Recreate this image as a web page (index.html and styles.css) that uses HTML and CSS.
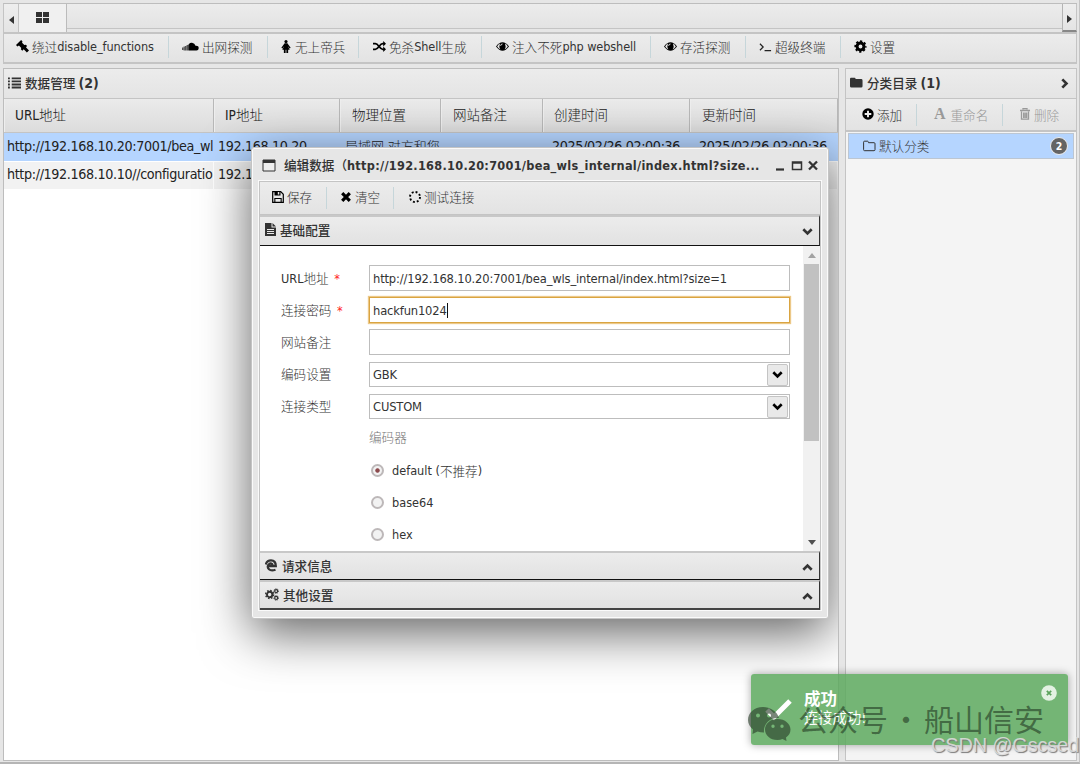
FILE: index.html
```html
<!DOCTYPE html>
<html lang="zh-CN">
<head>
  <meta charset="UTF-8">
  <title>数据管理</title>
  <link rel="stylesheet" href="styles.css">
</head>
<body>
  <svg class="defs" width="0" height="0">
    <symbol id="i-chevron" viewBox="0 0 10 8"><path d="M1.2 2 5 5.8 8.8 2" fill="none" stroke="currentColor" stroke-width="2.4"/></symbol>
    <symbol id="i-eye" viewBox="0 0 14 14"><path d="M0 7Q7-2 14 7 7 16 0 7Z"/><path d="M1.2 7Q2.700 4.600 4.300 3.900 2.800 7.400 4.700 10.200 2.700 9.400 1.200 7ZM12.800 7Q11.300 4.600 9.700 3.900 11.200 7.400 9.300 10.200 11.300 9.400 12.800 7Z" fill="#e9e9e9"/><path d="M5 6.300a2 2 0 0 1 2-2" fill="none" stroke="#e9e9e9"/></symbol>
    <symbol id="i-gear" viewBox="0 0 14 14"><g fill="none" stroke="#000"><circle cx="7" cy="7" r="3.700" stroke-width="3.200"/><circle cx="7" cy="7" r="5.500" stroke-width="2.200" stroke-dasharray="2.300 2.020" stroke-dashoffset="1.150"/></g></symbol>
  </svg>

  <div class="app">
    <div class="tabbar">
      <div class="arrow"><svg width="5" height="8"><path d="M5 0v8L0 4z" fill="#333"/></svg></div>
      <div class="tab"><svg width="13" height="11" fill="#333"><path d="M0 0h6v5H0zM7 0h6v5H7zM0 6h6v5H0zM7 6h6v5H7z"/></svg></div>
      <div class="tab-rest"></div>
      <div class="arrow right"><svg width="5" height="8"><path d="M0 0v8l5-4z" fill="#333"/></svg></div>
    </div>

    <div class="toolbar plugins">
      <div class="tool"><svg class="ic" viewBox="0 0 14 14"><path d="M0 5.500 5.500 0 7 1.500 6.500 3 9 5.500 10.500 5 12 6.500 10.700 7.800 14 11.200 11.700 13.500 8.300 10 6.800 11.500 5.200 10 5.700 8.700 3.200 6 1.500 7Z"/></svg>绕过<span>disable_functions</span></div>
      <div class="tool"><svg class="ic cloud" viewBox="0 0 17 9"><path d="M7 8.500V2Q8 .5 10 .7 12.800 1 13.500 3.800 16.700 3.500 16.700 6.200 16.500 8.500 14.500 8.500Z"/><path d="M.7 5.500v2.500M2.200 4.500v4M3.700 4v4.500M5.200 3v5.500M6.500 2.500v6" stroke="#444" stroke-width="1.200"/></svg>出网探测</div>
      <div class="tool"><svg class="ic slim" viewBox="0 0 10 14"><circle cx="5" cy="1.700" r="1.700"/><path d="M3.500 3.500h3L10 8.300 8.900 9.200 7 6.800 9 10.500H7.300V14H5.400v-3.500h-.8V14H2.700v-3.500H1L3 6.800 1.100 9.200 0 8.300Z"/></svg>无上帝兵</div>
      <div class="tool"><svg class="ic" viewBox="0 0 14 14"><path d="M0 4h2.500C6 4 7 10 10.500 10H12M0 10h2.500C6 10 7 4 10.500 4H12" fill="none" stroke="#000" stroke-width="1.900"/><path d="M11 1l3 3-3 3zM11 7l3 3-3 3z"/></svg>免杀<span>Shell</span>生成</div>
      <div class="tool"><svg class="ic"><use href="#i-eye"/></svg>注入不死<span>php webshell</span></div>
      <div class="tool"><svg class="ic"><use href="#i-eye"/></svg>存活探测</div>
      <div class="tool"><svg class="ic" viewBox="0 0 14 14"><path d="M1 4l3.500 3.500L1 11M6 11.500h7" fill="none" stroke="#222" stroke-width="1.300"/></svg>超级终端</div>
      <div class="tool"><svg class="ic"><use href="#i-gear"/></svg>设置</div>
    </div>

    <div class="main">
      <div class="data">
        <div class="panel-title"><svg class="ic" viewBox="0 0 14 14"><path d="M0 1.500h2v2H0zM0 4.800h2v2H0zM0 8.100h2v2H0zM0 11.400h2v2H0zM4 1.500h10v2H4zM4 4.800h10v2H4zM4 8.100h10v2H4zM4 11.400h10v2H4z"/></svg>数据管理 <span>(2)</span></div>
        <div class="row head">
          <div><span>URL</span>地址</div><div><span>IP</span>地址</div><div>物理位置</div><div>网站备注</div><div>创建时间</div><div>更新时间</div>
        </div>
        <div class="row selected">
          <div>http://192.168.10.20:7001/bea_wls_internal/index.html?size=1</div><div>192.168.10.20</div><div class="cn">局域网 对方和您在同一内部网</div><div></div><div>2025/02/26 02:00:36</div><div>2025/02/26 02:00:36</div>
        </div>
        <div class="row odd">
          <div>http://192.168.10.10//configuration.php</div><div>192.168.10.10</div><div></div><div></div><div></div><div></div>
        </div>

        <div class="window">
          <div class="win-head">
            <svg width="14" height="13" viewBox="0 0 14 13"><path d="M1 1h12v11H1z" fill="#eee" stroke="#333"/><path d="M1 1h12v3H1z" fill="#333"/></svg>
            <div class="win-title">编辑数据（<span>http://192.168.10.20:7001/bea_wls_internal/index.html?size...</span></div>
            <svg class="win-btns" width="44" height="12" viewBox="0 0 44 12"><path d="M1 9.500h8" stroke="#333" stroke-width="2.200"/><path d="M17.500 2h9v7.500h-9zM17 3h10" fill="none" stroke="#333" stroke-width="1.500"/><path d="M34 1.500l8 8M42 1.500l-8 8" stroke="#333" stroke-width="2.300"/></svg>
          </div>
          <div class="win-body">
            <div class="toolbar win-tools">
              <div class="tool"><svg class="ic small" viewBox="0 0 12 12"><path d="M.7.7h8l2.600 2.600v8H.7z" fill="none" stroke="#000" stroke-width="1.200"/><path d="M2.500 0h6v4.500h-6zM2.300 7h7.400v5H2.300z"/><path d="M5.800 1h1.500v2.500H5.800zM3.400 8h5.200v2.800H3.400z" fill="#e9e9e9"/></svg>保存</div>
              <div class="tool"><svg class="ic cross" viewBox="0 0 10 10"><path d="M1.200 1.200l7.600 7.600M8.800 1.200l-7.600 7.600" stroke="#000" stroke-width="3.200"/></svg>清空</div>
              <div class="tool"><svg class="ic small" viewBox="0 0 12 12"><circle cx="6" cy="6" r="5" fill="none" stroke="#000" stroke-width="1.900" stroke-dasharray="1.900 2.027"/></svg>测试连接</div>
            </div>
            <div class="acc open"><svg class="ic doc" viewBox="0 0 11 13"><path d="M0 0h6.500v4.500H11V13H0zM7.500 0 11 3.500H7.500z"/><path d="M2 6.500h7M2 8.500h7M2 10.500h7" stroke="#e9e9e9"/></svg>基础配置<svg class="chev"><use href="#i-chevron"/></svg></div>
            <div class="form">
              <div class="fields">
                <div class="field"><label><span>URL</span>地址 <i>*</i></label><div class="input">http://192.168.10.20:7001/bea_wls_internal/index.html?size=1</div></div>
                <div class="field"><label>连接密码 <i>*</i></label><div class="input focus">hackfun1024<b class="caret"></b></div></div>
                <div class="field"><label>网站备注</label><div class="input"></div></div>
                <div class="field"><label>编码设置</label><div class="input select">GBK<div class="drop"><svg><use href="#i-chevron"/></svg></div></div></div>
                <div class="field"><label>连接类型</label><div class="input select">CUSTOM<div class="drop"><svg><use href="#i-chevron"/></svg></div></div></div>
                <div class="encoder">编码器</div>
                <div class="radio on"><em></em>default (<span class="cn">不推荐</span>)</div>
                <div class="radio"><em></em>base64</div>
                <div class="radio"><em></em>hex</div>
              </div>
              <div class="scroll">
                <svg width="8" height="5"><path d="M0 5 4 0l4 5z" fill="#a3a3a3"/></svg>
                <div class="thumb"></div>
                <svg width="8" height="5"><path d="M0 0h8L4 5z" fill="#505050"/></svg>
              </div>
            </div>
            <div class="acc"><svg class="ic edge" viewBox="0 0 12 13"><path d="M.8 5.500C1.500 2.700 3.500 1.300 6 1.300c3 0 4.800 2 4.800 5.700H4M3.500 5.500C1.500 9 4.500 13 10.500 10.700M3.700 6C4.500 3.700 7.500 4 7.700 6.500" fill="none" stroke="#333" stroke-width="2.300"/></svg>请求信息<svg class="chev up"><use href="#i-chevron"/></svg></div>
            <div class="acc last"><svg class="ic gears" viewBox="0 0 15 14"><g fill="none" stroke="#333"><circle cx="5" cy="7" r="2.900" stroke-width="2.100"/><circle cx="5" cy="7" r="4.300" stroke-width="1.500" stroke-dasharray="1.700 1.677"/><circle cx="12" cy="3.300" r="1.600" stroke-width="1.300"/><circle cx="12" cy="10.700" r="1.600" stroke-width="1.300"/><circle cx="12" cy="3.300" r="2.500" stroke-dasharray="1 .963"/><circle cx="12" cy="10.700" r="2.500" stroke-dasharray="1 .963"/></g></svg>其他设置<svg class="chev up"><use href="#i-chevron"/></svg></div>
          </div>
        </div>
      </div>

      <div class="category">
        <div class="panel-title"><svg class="ic" viewBox="0 0 14 14"><path d="M1 2h4q1 0 1 1.300h6q1.500 0 1.500 1.500V11q0 1.300-1.500 1.300H1.500Q0 12.300 0 11V3.500Q0 2 1 2Z"/></svg>分类目录 <span>(1)</span><svg class="chev side"><use href="#i-chevron"/></svg></div>
        <div class="toolbar cat-tools">
          <div class="tool"><svg class="ic small" viewBox="0 0 12 12"><circle cx="6" cy="6" r="5.700"/><path d="M6 2.700v6.600M2.700 6h6.600" stroke="#eee" stroke-width="1.900"/></svg>添加</div>
          <div class="tool disabled"><span class="letter">A</span>重命名</div>
          <div class="tool disabled"><svg class="ic trash" viewBox="0 0 10 12"><path d="M3 1.500V.500h4v1M0 2.500h10M1.500 3.500v7.700h7V3.500M3.700 4.500v5.500M5.200 4.500v5.500M6.700 4.500v5.500" fill="none" stroke="#999" stroke-width="1.300"/></svg>删除</div>
        </div>
        <div class="folder"><svg width="13" height="12" viewBox="0 0 13 12"><path d="M1.600 1.200h3q.7 0 .9 1.500H11q1 0 1 1v6q0 1-1 1H1.600q-1 0-1-1V2.200q0-1 1-1Z" fill="none" stroke="#333"/></svg><span class="name">默认分类</span><span class="badge">2</span></div>
      </div>
    </div>
  </div>

  <div class="toast">
    <svg class="tick" width="30" height="24" viewBox="0 0 30 24"><path d="M5 12l7 7L28 3" fill="none" stroke="#fff" stroke-width="5"/></svg>
    <div class="toast-text"><strong>成功</strong><p>连接成功!</p></div>
    <svg class="close" width="16" height="16" viewBox="0 0 16 16"><circle cx="8" cy="8" r="7.800" fill="#e3f1e2"/><path d="M5.800 5.800l4.400 4.400M10.200 5.800l-4.400 4.400" stroke="#5ca35c" stroke-width="1.700"/></svg>
  </div>
  <div class="wechat">
    <svg width="43" height="35" viewBox="0 0 43 35"><path fill-rule="evenodd" d="M15 0C6 0 0 6 0 13c0 4 2 7 5 9.500L4.500 27l5-2.500q3 1 6.500 1C15 16 23 10 31 11 29 4 22 0 15 0ZM10 6.500a2 2 0 1 1 0 4 2 2 0 0 1 0-4Zm11 0a2 2 0 1 1 0 4 2 2 0 0 1 0-4Z"/><path fill-rule="evenodd" d="M29.500 12C22 12 17 17 17 22.500S22 33 29.500 33q3 0 5-1l4 2-.5-3.500c3-2 4.500-5 4.500-8C42.500 17 37 12 29.500 12ZM25 17.500a1.700 1.700 0 1 1 0 3.400 1.700 1.700 0 0 1 0-3.400Zm9 0a1.700 1.700 0 1 1 0 3.400 1.700 1.700 0 0 1 0-3.400Z"/></svg>
    <span>公众号</span><span class="dot">·</span><span>船山信安</span>
  </div>
  <div class="csdn">CSDN @Gscsed</div>
</body>
</html>
```

FILE: styles.css
```css
* {
  box-sizing: border-box;
}
body {
  margin: 0;
  width: 1080px;
  height: 764px;
  overflow: hidden;
  position: relative;
  background: #e6e6e6;
  font-family: "DejaVu Sans Condensed", "DejaVu Sans", "Noto Sans CJK SC", sans-serif;
  font-stretch: condensed;
  font-size: 12.6px;
  color: #333;
  white-space: nowrap;
}
svg {
  flex: none;
}
.defs {
  position: absolute;
}
.app {
  height: 764px;
  padding: 3px 2px 1px 3px;
  display: flex;
  flex-direction: column;
  border-bottom: 2px solid #b5b5b5;
  border-right: 1px solid #c4c4c4;
}
.ic {
  width: 13px;
  height: 13px;
  margin-right: 3px;
}
.small {
  width: 12px;
  height: 12px;
}

/* tabs */
.tabbar {
  display: flex;
  height: 29px;
  flex: none;
  border-top: 1px solid #bdbdbd;
  border-left: 1px solid #c4c4c4;
}
.arrow {
  width: 15px;
  display: flex;
  align-items: center;
  justify-content: center;
  padding-top: 3px;
  border-right: 1px solid #c4c4c4;
  background: linear-gradient(#eee, #e4e4e4);
}
.arrow.right {
  border-left: 1px solid #b4b4b4;
  border-bottom: 2px solid #888;
}
.tab {
  width: 48px;
  padding: 7px 0 0 17px;
  background: #f0f0f0;
  border-right: 1px solid #bbb;
}
.tab-rest {
  flex: 1;
  height: 25px;
  background: linear-gradient(#ececec, #e3e3e3);
  border-bottom: 1px solid #c4c4c4;
}

/* toolbars */
.toolbar {
  display: flex;
  align-items: center;
  background: linear-gradient(#ececec, #e3e3e3);
  border: 1px solid #c4c4c4;
}
.tool {
  display: flex;
  align-items: center;
  height: 22px;
  padding-bottom: 1px;
  border-right: 1px solid #c6d6da;
  font-weight: 300;
}
.tool:last-child {
  border: 0;
}
.tool span {
  font-weight: 400;
  letter-spacing: -.1px;
}
.plugins {
  height: 32px;
  flex: none;
  border-width: 2px 1px;
  padding-bottom: 2px;
}
.plugins .tool:nth-child(1) { width: 165px; padding-left: 12px; }
.plugins .tool:nth-child(2) { width: 99px; padding-left: 13px; }
.plugins .tool:nth-child(3) { width: 91px; padding-left: 13px; }
.plugins .tool:nth-child(4) { width: 123px; padding-left: 14px; }
.plugins .tool:nth-child(5) { width: 169px; padding-left: 14px; }
.plugins .tool:nth-child(6) { width: 95px; padding-left: 13px; }
.plugins .tool:nth-child(7) { width: 95px; padding-left: 13px; }
.plugins .tool:nth-child(8) { padding-left: 13px; }
.ic.cloud {
  width: 17px;
  height: 9px;
}
.ic.slim {
  width: 10px;
  margin-right: 4px;
}

/* panels */
.main {
  flex: 1;
  min-height: 0;
  display: flex;
  gap: 6px;
  padding-top: 4px;
}
.data {
  position: relative;
  width: 836px;
  overflow: hidden;
  background: #fff;
  border: 1px solid #bdbdbd;
}
.category {
  flex: 1;
  background: #f4f4f4;
  border: 1px solid #c4c4c4;
}
.panel-title {
  display: flex;
  align-items: center;
  height: 30px;
  padding: 0 0 2px 4px;
  font-weight: 500;
  background: linear-gradient(#ececec, #e4e4e4);
  border-bottom: 1px solid #c4c4c4;
}
.panel-title .ic {
  margin-right: 4px;
  fill: #333;
}
.panel-title span {
  font-size: 14px;
  font-weight: 700;
  margin-left: 3px;
}

/* grid */
.row {
  display: flex;
  height: 28px;
  line-height: 27px;
  font-size: 14.2px;
  letter-spacing: -.36px;
  color: #222;
}
.row div {
  overflow: hidden;
  padding-left: 3px;
  border-right: 1px solid #fff;
}
.row div:nth-child(1) { width: 210px; }
.row div:nth-child(2) { width: 126px; padding-left: 4px; }
.row div:nth-child(3) { width: 101px; }
.row div:nth-child(4) { width: 102px; }
.row div:nth-child(5) { width: 147px; }
.row div:nth-child(6) { width: 148px; }
.row .cn {
  font-size: 13px;
  font-weight: 300;
  letter-spacing: 0;
}
.row.head {
  height: 34px;
  line-height: 32px;
  font-size: 13.5px;
  font-weight: 300;
  letter-spacing: 0;
  background: linear-gradient(#ebebeb, #dcdcdc);
  border-bottom: 1px solid #c4c4c4;
}
.row.head div {
  padding-left: 10px;
  border-right: 1px solid #b8b8b8;
  border-left: 1px solid #eee;
}
.row.head div:nth-child(3),
.row.head div:nth-child(4),
.row.head div:nth-child(6) {
  padding-left: 11px;
}
.row.head span {
  font-weight: 400;
}
.row.selected {
  background: #b5d5ff;
}
.row.selected div {
  border-color: transparent;
}
.row.selected div:nth-child(n+5) {
  padding-left: 9px;
}
.row.selected .cn {
  padding-left: 5px;
}
.row.odd {
  height: 27px;
  margin-top: 1px;
  line-height: 25px;
  background: #f2f2f2;
}

/* category */
.chev {
  width: 11px;
  height: 9px;
  margin: 2px 6px 0 auto;
}
.chev.up {
  transform: rotate(180deg);
}
.chev.side {
  transform: rotate(-90deg);
}
.cat-tools {
  height: 33px;
  border-width: 0 0 2px;
}
.cat-tools .tool:nth-child(1) { width: 71px; padding-left: 16px; }
.cat-tools .tool:nth-child(2) { width: 86px; padding-left: 17px; }
.cat-tools .tool:nth-child(3) { padding-left: 17px; }
.disabled {
  color: #999;
}
.tool .letter {
  font: bold 16px "Liberation Serif", serif;
  margin-right: 5px;
}
.ic.trash {
  width: 10px;
  height: 12px;
  margin-right: 4px;
}
.folder {
  display: flex;
  align-items: center;
  height: 26px;
  margin: 1px 2px;
  padding: 0 5px 0 14px;
  background: #b5d5ff;
  border: 1px solid #bcc6d2;
  font-weight: 300;
}
.folder svg {
  margin-right: 3px;
}
.folder .name {
  padding-bottom: 2px;
}
.badge {
  width: 18px;
  height: 18px;
  margin-left: auto;
  border: 1px solid #eee;
  border-radius: 50%;
  background: #646464;
  color: #fff;
  font-size: 10.5px;
  font-weight: 700;
  line-height: 16px;
  text-align: center;
}

/* edit window, sits over the grid */
.window {
  position: absolute;
  left: 247px;
  top: 78px;
  width: 578px;
  height: 472px;
  padding: 1px 7px 0;
  background: #e6e6e6;
  border: 1px solid #c4c4c4;
  border-radius: 3px;
  box-shadow: inset 0 0 0 1px #fafafa, 0 14px 50px rgba(0, 0, 0, .62);
}
.win-head {
  display: flex;
  align-items: center;
  height: 32px;
  padding: 1px 2px 0 3px;
}
.win-title {
  margin: 0 0 3px 8px;
  font-weight: 500;
}
.win-title span {
  font-weight: 700;
  letter-spacing: .29px;
}
.win-btns {
  margin: 0 0 0 auto;
}
.win-body {
  height: 429px;
  border: 1px solid #c4c4c4;
  outline: 1px solid #fafafa;
  background: #fff;
}
.win-tools {
  height: 33px;
  border-width: 0 0 1px;
  padding-bottom: 1px;
}
.win-tools .tool {
  padding-bottom: 2px;
}
.win-tools .tool:nth-child(1) { width: 67px; padding-left: 12px; }
.win-tools .tool:nth-child(2) { width: 67px; padding-left: 14px; }
.win-tools .tool:nth-child(3) { padding-left: 15px; }
.ic.cross {
  width: 10px;
  height: 10px;
  margin-right: 4px;
}
.acc {
  display: flex;
  align-items: center;
  height: 29px;
  padding: 0 0 2px 5px;
  font-weight: 500;
  background: linear-gradient(#ececec, #e2e2e2);
  border-top: 2px solid #c8c8c8;
  border-right: 1px solid #333;
  border-bottom: 1px solid #111;
}
.acc.open {
  height: 31px;
  padding-bottom: 3px;
}
.acc.last {
  height: 30px;
  border-bottom: 2px solid #444;
}
.acc .chev {
  margin-top: 4px;
}
.ic.doc {
  width: 11px;
  margin-right: 4px;
  fill: #333;
}
.ic.edge {
  width: 12px;
  margin-right: 5px;
}
.ic.gears {
  width: 14px;
  margin-right: 4px;
}
.form {
  display: flex;
  height: 305px;
  background: #fff;
}
.fields {
  flex: 1;
  padding: 19px 0 0 21px;
}
.field {
  display: flex;
  align-items: center;
  height: 26px;
  margin-bottom: 6.2px;
}
.field label {
  width: 88px;
  padding-bottom: 2px;
  font-weight: 300;
}
.field label span {
  font-weight: 400;
}
.field i {
  margin-left: 2px;
  color: #f22;
  font-style: normal;
}
.input {
  position: relative;
  display: flex;
  align-items: center;
  width: 421px;
  height: 26px;
  padding-left: 3px;
  border: 1px solid #bdbdbd;
  font-size: 12.8px;
  letter-spacing: -.15px;
}
.input.focus {
  border-color: #d9a441;
  box-shadow: 0 0 1px 1px #ecc888;
}
.caret {
  width: 1px;
  height: 15px;
  background: #111;
}
.select {
  height: 25px;
}
.drop {
  width: 21px;
  height: 22px;
  margin: 0 1px 0 auto;
  border: 1px solid #c4c4c4;
  border-radius: 2px;
  background: #e9e9e9;
  color: #000;
}
.drop svg {
  display: block;
  width: 11px;
  height: 9px;
  margin: 5px 4px;
}
.encoder {
  margin-left: 88px;
  height: 25px;
  line-height: 24px;
  color: #777;
  font-weight: 300;
}
.radio {
  display: flex;
  align-items: center;
  height: 32.3px;
  padding: 6px 0 0 90px;
}
.radio em {
  width: 13px;
  height: 13px;
  margin-right: 8px;
  border: 2px solid #bdb8b9;
  border-radius: 50%;
  background: #f2f2f2;
}
.radio.on em {
  background: radial-gradient(circle, #8c4a4d 0 1.8px, #f2f2f2 2.6px);
}
.radio .cn {
  font-weight: 300;
}
.scroll {
  display: flex;
  flex-direction: column;
  align-items: center;
  width: 17px;
  padding: 7px 0 6px;
  background: #f1f1f1;
}
.thumb {
  width: 15px;
  height: 177px;
  margin: 6px 0 auto;
  background: #c1c1c1;
}

/* toast */
.toast {
  position: absolute;
  left: 751px;
  top: 674px;
  width: 317px;
  height: 71px;
  display: flex;
  padding: 11px 11px;
  color: #fff;
  background: rgba(91, 168, 92, .84);
  border-radius: 3px;
  box-shadow: 0 0 8px rgba(0, 0, 0, .35);
}
.tick {
  margin-top: 13px;
}
.toast-text {
  margin: 5px auto 0 12px;
  font-size: 16.5px;
  line-height: 19px;
}
.toast-text p {
  margin: 0;
  font-size: 14.3px;
}

/* watermarks */
.wechat {
  position: absolute;
  left: 748px;
  top: 695px;
  height: 46px;
  display: flex;
  align-items: center;
  font: 400 30px/46px "Noto Sans CJK SC", sans-serif;
  color: rgba(35, 58, 35, .62);
}
.wechat svg {
  fill: rgba(40, 60, 40, .62);
  margin: 12px 7px 0 0;
}
.wechat .dot {
  width: 36px;
  text-align: center;
}
.csdn {
  position: absolute;
  left: 931px;
  top: 732px;
  font: 20px/26px "Liberation Sans", sans-serif;
  letter-spacing: -.2px;
  color: rgba(225, 225, 225, .85);
  text-shadow: 1px 1px 1px #777;
}
```
